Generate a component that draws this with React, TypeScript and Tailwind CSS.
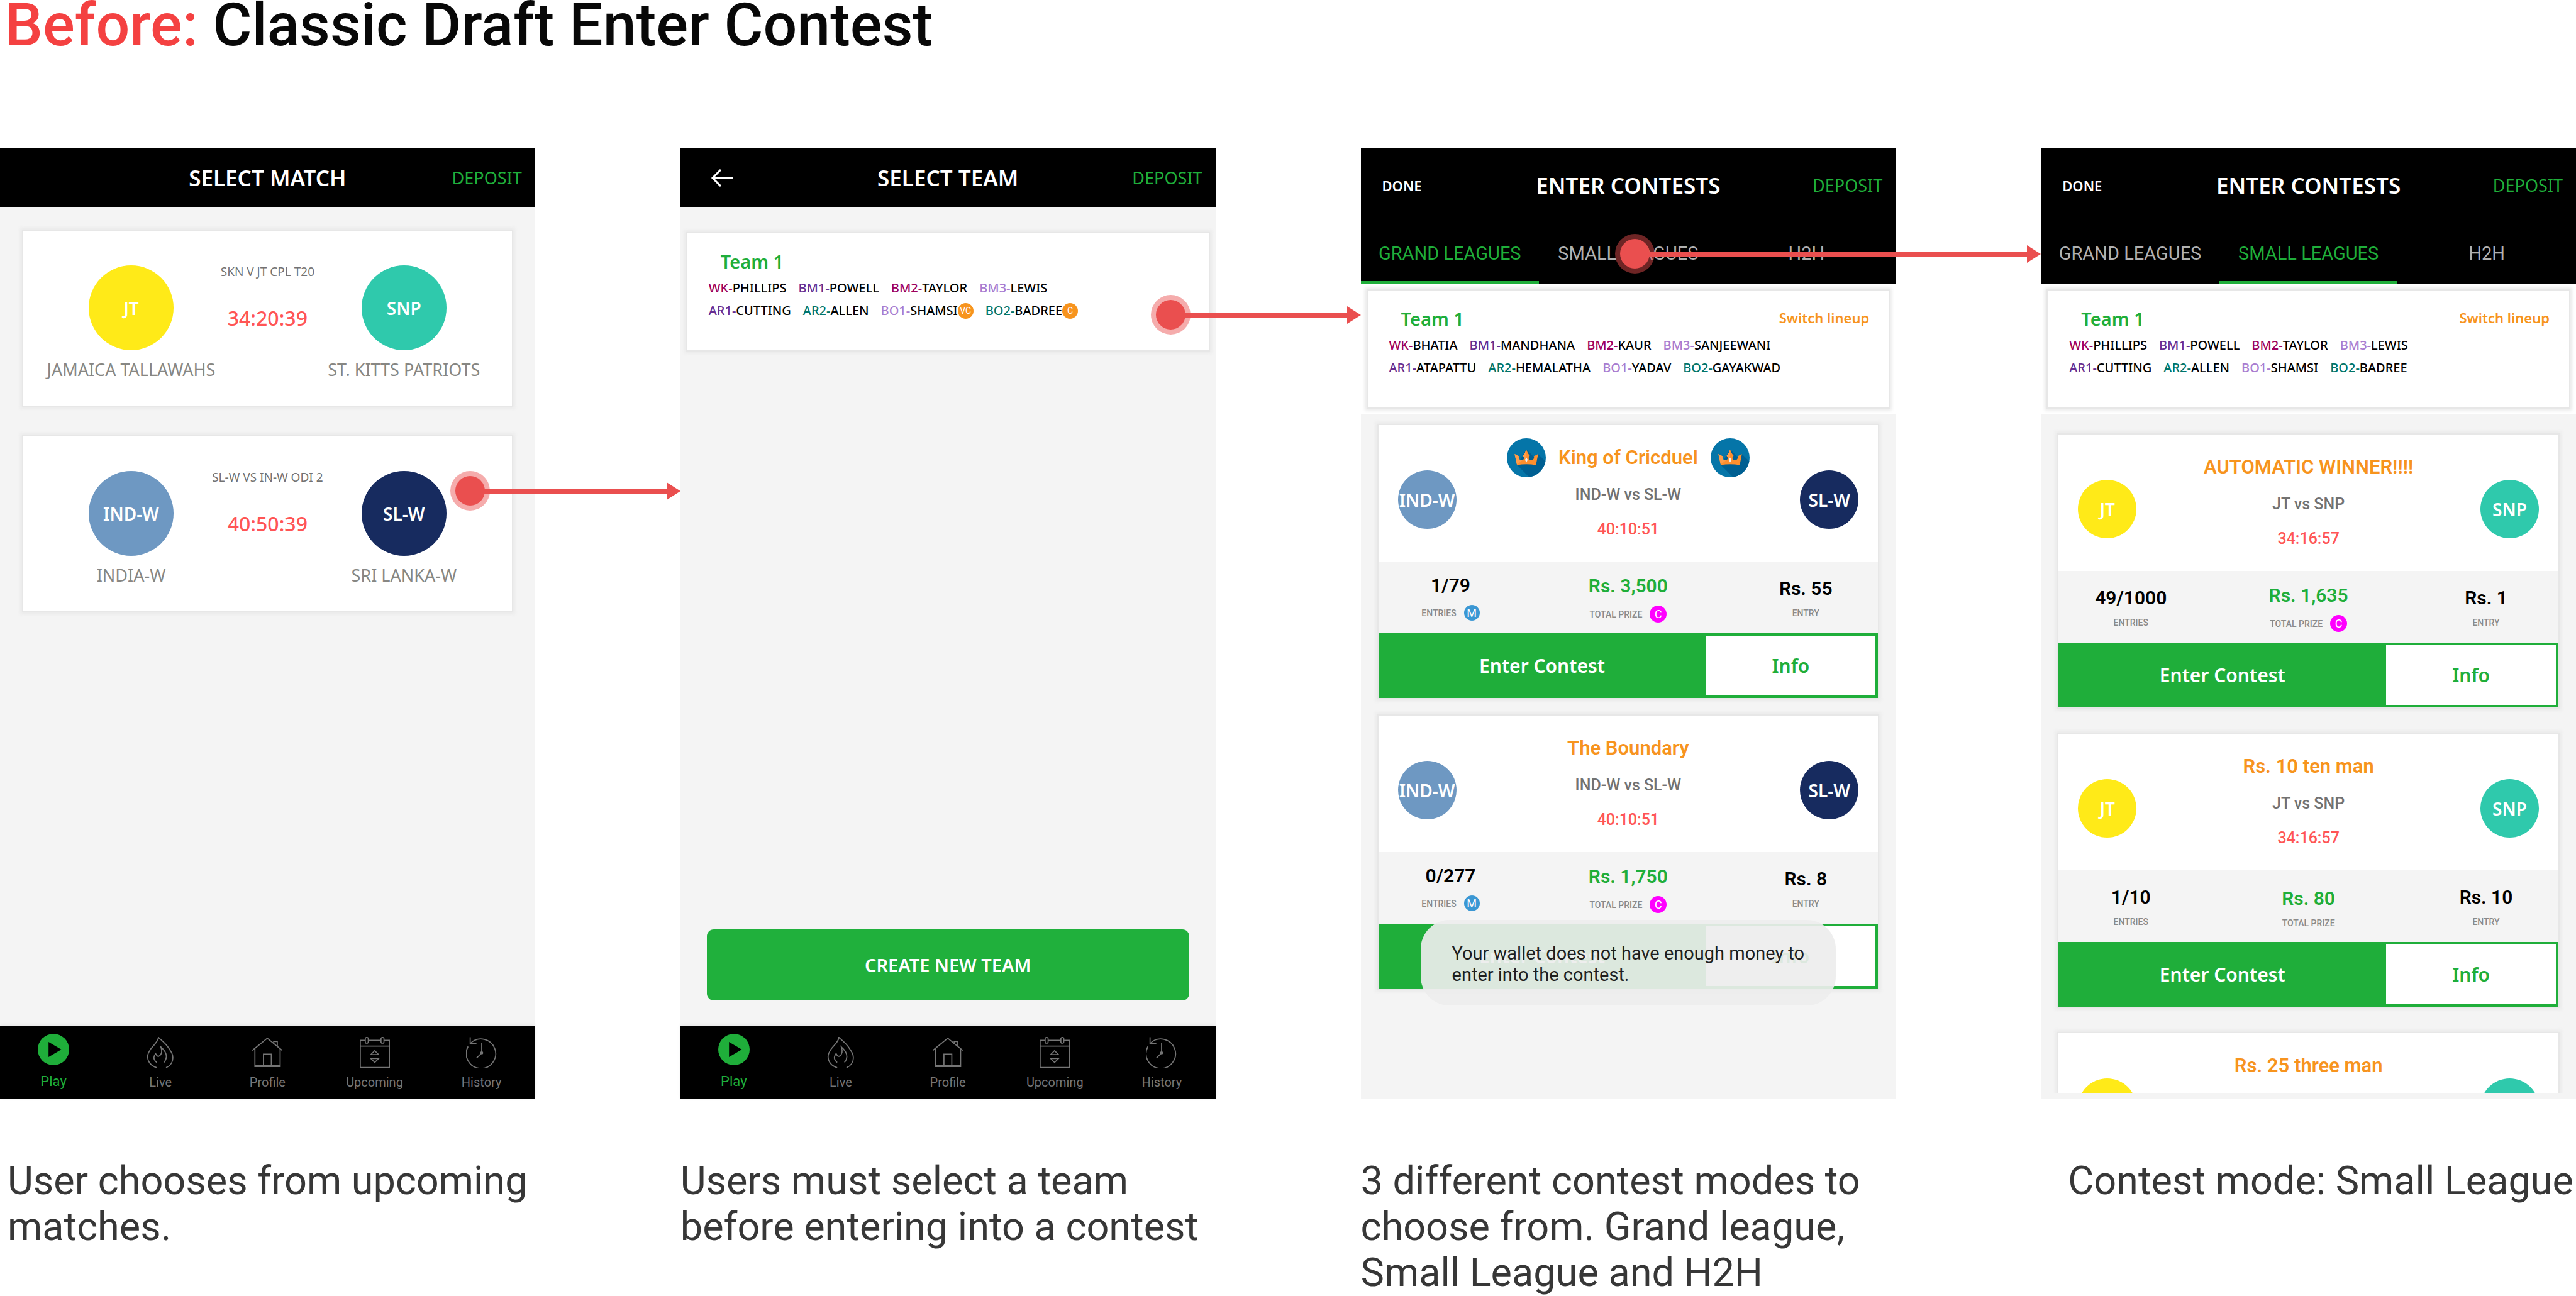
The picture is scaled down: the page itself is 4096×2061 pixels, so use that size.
import type { ReactNode } from "react";

const PLAYER_COLORS = {
  magenta: "text-[#9e005d]",
  purple: "text-[#662d91]",
  lilac: "text-[#a97cd0]",
  teal: "text-[#00756b]",
};

type Player = {
  slot: string;
  name: string;
  color: keyof typeof PLAYER_COLORS;
  badge?: string;
};

type Side = { short: string; color: string };

const JT: Side = { short: "JT", color: "bg-[#ffea18]" };
const SNP: Side = { short: "SNP", color: "bg-[#2fc9ac]" };
const INDW: Side = { short: "IND-W", color: "bg-[#6e98c2]" };
const SLW: Side = { short: "SL-W", color: "bg-[#172b5f]" };

const cplTeam = (withBadges: boolean): Player[][] => [
  [
    { slot: "WK-", name: "PHILLIPS", color: "magenta" },
    { slot: "BM1-", name: "POWELL", color: "purple" },
    { slot: "BM2-", name: "TAYLOR", color: "magenta" },
    { slot: "BM3-", name: "LEWIS", color: "lilac" },
  ],
  [
    { slot: "AR1-", name: "CUTTING", color: "purple" },
    { slot: "AR2-", name: "ALLEN", color: "teal" },
    { slot: "BO1-", name: "SHAMSI", color: "lilac", badge: withBadges ? "VC" : undefined },
    { slot: "BO2-", name: "BADREE", color: "teal", badge: withBadges ? "C" : undefined },
  ],
];

const womenTeam: Player[][] = [
  [
    { slot: "WK-", name: "BHATIA", color: "magenta" },
    { slot: "BM1-", name: "MANDHANA", color: "purple" },
    { slot: "BM2-", name: "KAUR", color: "magenta" },
    { slot: "BM3-", name: "SANJEEWANI", color: "lilac" },
  ],
  [
    { slot: "AR1-", name: "ATAPATTU", color: "purple" },
    { slot: "AR2-", name: "HEMALATHA", color: "teal" },
    { slot: "BO1-", name: "YADAV", color: "lilac" },
    { slot: "BO2-", name: "GAYAKWAD", color: "teal" },
  ],
];

/* ---------- icons ---------- */

function BackArrow() {
  return (
    <svg viewBox="0 0 36 28" className="h-7 w-9" fill="none" stroke="#fff" strokeWidth="3" aria-hidden="true">
      <path d="M16 1 3 14l13 13M3 14h33" />
    </svg>
  );
}

function PlayIcon() {
  return (
    <svg viewBox="0 0 64 64" className="size-[50px]" aria-hidden="true">
      <circle cx="32" cy="32" r="32" fill="#1fae3a" />
      <path d="M22 16.500v31L48 32z" fill="#000" />
    </svg>
  );
}

function LineIcon({ children }: { children: ReactNode }) {
  return (
    <svg
      viewBox="0 0 64 64"
      className="size-[50px]"
      fill="none"
      stroke="currentColor"
      strokeWidth="2.2"
      aria-hidden="true"
    >
      {children}
    </svg>
  );
}

function FlameIcon() {
  return (
    <LineIcon>
      <path d="M24.500 62.500C13 59 6 50.500 6 40c0-6 2.500-9 6-15C19 15.500 27.500 10 28 .8 34 7 42 12.500 48.500 22c5.500 8 9 13 9 20.500 0 8.500-5 16.500-14 20" />
      <path d="M24.600 52c-7-6-7.500-11-2.300-18.200 1.700 2.700 2.700 7 6.800 5.400 5.400-3.200 6.900-10.200 3.900-18.700 6.500 5.500 11.200 12.500 11.200 19.500 0 5-2 8.500-4.900 11.900" />
    </LineIcon>
  );
}

function HouseIcon() {
  return (
    <LineIcon>
      <path d="M1.500 27.500 32 2.800l30.500 24.700" />
      <path d="M45 13.500v-4h7.400v9.900M6.800 24v36.400h51.400V24M6.800 58.200h51.400M24.200 58V35h16v23" />
    </LineIcon>
  );
}

function CalendarIcon() {
  return (
    <LineIcon>
      <path d="M12.500 6.800H2.400v55.400h59.200V6.800H50.500M18.500 6.800h26M2.400 18.700h59.200" />
      <rect x="12.600" y="1.200" width="6" height="11.600" rx="2.500" />
      <rect x="44.600" y="1.200" width="6" height="11.600" rx="2.500" />
      <path d="m31.800 28-8 8h16zM23.800 44h16l-8 8z" />
    </LineIcon>
  );
}

function HistoryIcon() {
  return (
    <LineIcon>
      <path d="M4.200 19.500A30 30 0 1 0 9.500 12.600" />
      <path d="M8.500.500v13.200h12.800M32 11.500v21L21.500 43" />
      <circle cx="32" cy="32.500" r="2" fill="currentColor" />
    </LineIcon>
  );
}

function CrownBadge({ id }: { id: string }) {
  return (
    <svg viewBox="0 0 79 79" className="size-[62px] shrink-0" aria-hidden="true">
      <clipPath id={id}>
        <circle cx="39.500" cy="39.500" r="39.500" />
      </clipPath>
      <g clipPath={`url(#${id})`}>
        <rect width="79" height="79" fill="#0575a8" />
        <path d="M39.500 22.700 54 37.200l9.300-5.500L79 47.400V79H45.700l-25-25z" fill="#005f92" />
      </g>
      <path
        d="M15.700 31.700l8.600 4.600c-1.400 4.700 1.600 8.400 5.900 8.200 4.600-.2 6.400-5.300 2.300-9.300 3.300-3.200 5.400-7.500 7-12.500 1.600 5 3.700 9.300 7 12.500-4.100 4-2.300 9.100 2.300 9.300 4.300.2 7.300-3.500 5.900-8.200l8.600-4.600L59 54q-19.500-3-38.300 0z"
        fill="#ff8f2e"
      />
      <path
        d="M15.700 31.700l8.600 4.600c-1.400 4.700 1.600 8.400 5.900 8.200 4.600-.2 6.400-5.300 2.300-9.300 3.300-3.200 5.400-7.500 7-12.500V39l-19.300 14z"
        fill="#ff9d4a"
      />
      <path d="m39.500 38.800 2.700 5-2.700 5.400-2.700-5.400z" fill="#eef3f8" />
    </svg>
  );
}

/* ---------- shared pieces ---------- */

/* Touch point with an arrow that ends at the left edge of the next phone. */
function FlowArrow({ place }: { place: string }) {
  return (
    <div className={`pointer-events-none absolute -right-[231px] z-20 flex items-center ${place}`}>
      <span className="flex size-[63px] shrink-0 items-center justify-center rounded-full bg-[#ea4f4f]/47">
        <span className="size-[47px] rounded-full bg-[#ea4f4f]" />
      </span>
      <span className="-ml-3 h-2 flex-1 bg-[#ea4f4f]" />
      <svg viewBox="0 0 22 28" className="h-7 w-[22px] shrink-0" aria-hidden="true">
        <path d="M0 0 22 14 0 28z" fill="#ea4f4f" />
      </svg>
    </div>
  );
}

function Bubble({ side, size }: { side: Side; size: string }) {
  return (
    <span
      className={`flex shrink-0 items-center justify-center rounded-full text-[28px] leading-9 font-semibold whitespace-nowrap text-white ${size} ${side.color}`}
    >
      {side.short}
    </span>
  );
}

function TitleBar({ title, left, height }: { title: string; left?: ReactNode; height: string }) {
  return (
    <div className={`grid grid-cols-[1fr_auto_1fr] items-center bg-black text-white ${height}`}>
      <div className="flex">{left}</div>
      <h2 className="text-[35px] leading-10 font-semibold">{title}</h2>
      <button type="button" className="justify-self-end pr-[21px] text-[27px] leading-8 text-[#1fae3a]">
        DEPOSIT
      </button>
    </div>
  );
}

const NAV_ITEMS = [
  { label: "Play", icon: <PlayIcon /> },
  { label: "Live", icon: <FlameIcon /> },
  { label: "Profile", icon: <HouseIcon /> },
  { label: "Upcoming", icon: <CalendarIcon /> },
  { label: "History", icon: <HistoryIcon /> },
];

function BottomNav() {
  return (
    <nav className="grid h-[116px] shrink-0 grid-cols-5 bg-black font-[Roboto,sans-serif] shadow-[0_-2px_6px_rgba(0,0,0,0.06)]">
      {NAV_ITEMS.map((item, i) => (
        <a
          key={item.label}
          href={`#${item.label.toLowerCase()}`}
          className={
            i === 0
              ? "flex flex-col items-center gap-3.5 pt-3 text-[22px] leading-6 text-[#1fae3a]"
              : "flex flex-col items-center gap-2.5 pt-[17px] text-[20px] leading-6 text-[#757575]"
          }
        >
          {item.icon}
          {item.label}
        </a>
      ))}
    </nav>
  );
}

const CARD_SHADOW = "shadow-[0_0_0_2px_#e7e7e7,0_0_5px_5px_#ebebeb]";

function TeamCard({ rows, switchable }: { rows: Player[][]; switchable?: boolean }) {
  return (
    <article className={`mx-[11px] bg-white pt-[27px] pr-[31px] pb-[45px] pl-[34px] ${CARD_SHADOW}`}>
      <div className="flex items-start justify-between">
        <h3 className="pl-[19px] text-[29px] leading-9 font-semibold text-[#1fae3a]">Team 1</h3>
        {switchable && (
          <a href="#switch" className="text-[22px] leading-8 font-semibold text-[#f7941e] underline decoration-1 underline-offset-4">
            Switch lineup
          </a>
        )}
      </div>
      <div className="mt-1.5 text-[20px] leading-9 font-medium whitespace-nowrap text-black">
        {rows.map((row, i) => (
          <div key={i} className="flex gap-[19px]">
            {row.map((p) => (
              <span key={p.slot} className="flex items-center">
                <span className={PLAYER_COLORS[p.color]}>{p.slot}</span>
                {p.name}
                {p.badge && (
                  <span className="flex size-[25px] items-center justify-center rounded-full bg-[#f7941e] font-[Roboto,sans-serif] text-[14px] leading-4 font-normal text-white">
                    {p.badge}
                  </span>
                )}
              </span>
            ))}
          </div>
        ))}
      </div>
    </article>
  );
}

/* ---------- select match ---------- */

type Match = { event: string; time: string; home: Side; homeName: string; away: Side; awayName: string };

const MATCHES: Match[] = [
  {
    event: "SKN V JT CPL T20",
    time: "34:20:39",
    home: JT,
    homeName: "JAMAICA TALLAWAHS",
    away: SNP,
    awayName: "ST. KITTS PATRIOTS",
  },
  {
    event: "SL-W VS IN-W ODI 2",
    time: "40:50:39",
    home: INDW,
    homeName: "INDIA-W",
    away: SLW,
    awayName: "SRI LANKA-W",
  },
];

function MatchSide({ side, name }: { side: Side; name: string }) {
  return (
    <div className="flex flex-col items-center gap-[15px] text-[27px] leading-8 whitespace-nowrap text-[#878783]">
      <Bubble side={side} size="size-[135px]" />
      {name}
    </div>
  );
}

function MatchCard({ match }: { match: Match }) {
  return (
    <article className={`grid grid-cols-3 bg-white px-[63px] pt-[55px] pb-[41px] ${CARD_SHADOW}`}>
      <MatchSide side={match.home} name={match.homeName} />
      <div className="flex flex-col items-center gap-[42px] whitespace-nowrap">
        <p className="-mt-0.5 text-[19px] leading-6 text-[#727272]">{match.event}</p>
        <p className="text-[32px] leading-10 font-medium text-[#ff5555]">{match.time}</p>
      </div>
      <MatchSide side={match.away} name={match.awayName} />
    </article>
  );
}

/* ---------- contests ---------- */

type Contest = {
  title: string;
  crowned?: boolean;
  home: Side;
  away: Side;
  time: string;
  entries: string;
  multi?: boolean;
  prize: string;
  capped?: boolean;
  entry: string;
};

const GRAND: Contest[] = [
  {
    title: "King of Cricduel",
    crowned: true,
    home: INDW,
    away: SLW,
    time: "40:10:51",
    entries: "1/79",
    multi: true,
    prize: "Rs. 3,500",
    capped: true,
    entry: "Rs. 55",
  },
  {
    title: "The Boundary",
    home: INDW,
    away: SLW,
    time: "40:10:51",
    entries: "0/277",
    multi: true,
    prize: "Rs. 1,750",
    capped: true,
    entry: "Rs. 8",
  },
];

const SMALL: Contest[] = [
  {
    title: "AUTOMATIC WINNER!!!!",
    home: JT,
    away: SNP,
    time: "34:16:57",
    entries: "49/1000",
    prize: "Rs. 1,635",
    capped: true,
    entry: "Rs. 1",
  },
  {
    title: "Rs. 10 ten man",
    home: JT,
    away: SNP,
    time: "34:16:57",
    entries: "1/10",
    prize: "Rs. 80",
    entry: "Rs. 10",
  },
  {
    title: "Rs. 25 three man",
    home: JT,
    away: SNP,
    time: "34:16:57",
    entries: "1/3",
    prize: "Rs. 60",
    entry: "Rs. 25",
  },
];

function Stat({ value, label, badge, tone = "" }: { value: string; label: string; badge?: ReactNode; tone?: string }) {
  return (
    <div className="flex flex-col items-center justify-center gap-[13px]">
      <p className={`text-[30px] leading-9 font-semibold ${tone}`}>{value}</p>
      <p className="flex items-center gap-3 text-[14px] leading-4 font-medium text-[#8a8a8a]">
        {label}
        {badge}
      </p>
    </div>
  );
}

function ContestCard({ contest }: { contest: Contest }) {
  return (
    <article className={`shrink-0 bg-white font-[Roboto,sans-serif] ${CARD_SHADOW}`}>
      <div className="flex items-start justify-between px-[31px] pb-[35px] font-['Noto_Sans',sans-serif]">
        <div className="pt-[72px]">
          <Bubble side={contest.home} size="size-[93px]" />
        </div>
        <div className="flex flex-col items-center pt-[21px] font-[Roboto,sans-serif] font-semibold">
          <div className="flex h-[62px] items-center gap-5">
            {contest.crowned && <CrownBadge id="crown-left" />}
            <h3 className="text-[31px] leading-9 text-[#f7941e]">{contest.title}</h3>
            {contest.crowned && <CrownBadge id="crown-right" />}
          </div>
          <p className="mt-[13px] text-[25px] leading-[30px] font-medium text-[#727272]">
            {contest.home.short} vs {contest.away.short}
          </p>
          <p className="mt-6 text-[25px] leading-8 font-medium text-[#ff5555]">{contest.time}</p>
        </div>
        <div className="pt-[72px]">
          <Bubble side={contest.away} size="size-[93px]" />
        </div>
      </div>
      <div className="grid h-[114px] grid-cols-[230px_1fr_230px] bg-[#f4f4f4] text-black">
        <Stat
          value={contest.entries}
          label="ENTRIES"
          badge={
            contest.multi && (
              <span className="flex size-[25px] items-center justify-center rounded-full bg-[#3b97d3] text-[18px] leading-6 font-normal text-white">
                M
              </span>
            )
          }
        />
        <div className="grid pt-1">
          <Stat
            value={contest.prize}
            label="TOTAL PRIZE"
            tone="text-[#1fae3a]"
            badge={
              contest.capped && (
                <span className="flex size-[27px] items-center justify-center rounded-full bg-[#ff00ff] text-[18px] leading-6 font-normal text-white">
                  C
                </span>
              )
            }
          />
        </div>
        <Stat value={contest.entry} label="ENTRY" />
      </div>
      <div className="flex h-[103px] border-y-4 border-r-4 border-[#1fae3a] bg-[#1fae3a] font-['Noto_Sans',sans-serif] text-[30px] leading-10 font-semibold">
        <button type="button" className="w-[521px] text-white">
          Enter Contest
        </button>
        <button type="button" className="flex-1 bg-white text-[#1fae3a]">
          Info
        </button>
      </div>
    </article>
  );
}

const LEAGUES = ["GRAND LEAGUES", "SMALL LEAGUES", "H2H"];

function ContestHeader({ active }: { active: string }) {
  return (
    <header className="shrink-0 bg-black">
      <TitleBar
        title="ENTER CONTESTS"
        height="h-[118px]"
        left={
          <button type="button" className="pl-[34px] text-[22px] leading-8 font-semibold">
            DONE
          </button>
        }
      />
      <div role="tablist" className="grid h-[97px] grid-cols-3 font-[Roboto,sans-serif] text-[29px] leading-9">
        {LEAGUES.map((name) => (
          <button
            key={name}
            type="button"
            role="tab"
            aria-selected={name === active}
            className={
              name === active
                ? "border-y-4 border-t-transparent border-b-[#1fae3a] whitespace-nowrap text-[#1fae3a]"
                : "border-y-4 border-transparent whitespace-nowrap text-[#b0b0b0]"
            }
          >
            {name}
          </button>
        ))}
      </div>
    </header>
  );
}

/* ---------- board ---------- */

function Phone({ children, caption, captionStyle = "" }: { children: ReactNode; caption: string; captionStyle?: string }) {
  return (
    <figure>
      <div className="relative flex aspect-[9/16] min-h-0 w-full flex-col bg-[#f4f4f4] font-['Noto_Sans',sans-serif]">
        {children}
      </div>
      <figcaption className={`mt-[93px] text-[63px] leading-[73px] text-[#373737] ${captionStyle}`}>{caption}</figcaption>
    </figure>
  );
}

export default function App() {
  return (
    <main className="bg-white font-[Roboto,sans-serif]">
      <h1 className="pl-2 text-[95px] leading-[80px] font-medium text-[#080808]">
        <span className="text-[#f44141]">Before:</span> Classic Draft Enter Contest
      </h1>

      <div className="mt-[156px] grid grid-cols-4 gap-x-[231px]">
        <Phone caption="User chooses from upcoming matches." captionStyle="pl-3">
          <TitleBar title="SELECT MATCH" height="h-[93px]" />
          <div className="flex flex-1 flex-col gap-[49px] px-[37px] pt-[38px]">
            {MATCHES.map((m) => (
              <MatchCard key={m.event} match={m} />
            ))}
          </div>
          <BottomNav />
          <FlowArrow place="left-[716px] top-[513px]" />
        </Phone>

        <Phone caption="Users must select a team before entering into a contest">
          <TitleBar
            title="SELECT TEAM"
            height="h-[93px]"
            left={
              <button type="button" aria-label="Back" className="pl-[48px]">
                <BackArrow />
              </button>
            }
          />
          <div className="flex flex-1 flex-col justify-between pt-[42px] pb-[41px]">
            <TeamCard rows={cplTeam(true)} />
            <button
              type="button"
              className="mx-[42px] h-[113px] rounded-[11px] bg-[#20b03c] text-[29px] leading-8 font-semibold text-white"
            >
              CREATE NEW TEAM
            </button>
          </div>
          <BottomNav />
          <FlowArrow place="left-[748px] top-[233px]" />
        </Phone>

        <Phone caption="3 different contest modes to choose from. Grand league, Small League and H2H">
          <ContestHeader active="GRAND LEAGUES" />
          <div className="bg-white py-[11px]">
            <TeamCard rows={womenTeam} switchable />
          </div>
          <div className="flex min-h-0 flex-1 flex-col gap-7 overflow-hidden px-7 pt-[17px]">
            {GRAND.map((c) => (
              <ContestCard key={c.title} contest={c} />
            ))}
          </div>
          <p
            role="status"
            className="absolute inset-x-[95px] bottom-[149px] rounded-[46px] bg-[#ededed]/92 pt-[36px] pr-[40px] pb-[32px] pl-[50px] font-[Roboto,sans-serif] text-[29px] leading-[34px] text-[#1f1f1f]"
          >
            Your wallet does not have enough money to enter into the contest.
          </p>
          <FlowArrow place="left-[404px] top-[136px]" />
        </Phone>

        <Phone caption="Contest mode: Small League" captionStyle="pr-1 text-right">
          <ContestHeader active="SMALL LEAGUES" />
          <div className="bg-white py-[11px]">
            <TeamCard rows={cplTeam(false)} switchable />
          </div>
          <div className="mb-2.5 flex min-h-0 flex-1 flex-col gap-[42px] overflow-hidden px-7 pt-8">
            {SMALL.map((c) => (
              <ContestCard key={c.title} contest={c} />
            ))}
          </div>
        </Phone>
      </div>
    </main>
  );
}
